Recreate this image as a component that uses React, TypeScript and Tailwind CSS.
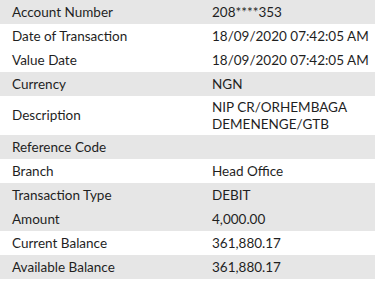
import React from "react";

const rows: { label: string; value: React.ReactNode; gray: boolean }[] = [
  { label: "Account Number", value: "208****353", gray: true },
  { label: "Date of Transaction", value: "18/09/2020 07:42:05 AM", gray: false },
  { label: "Value Date", value: "18/09/2020 07:42:05 AM", gray: false },
  { label: "Currency", value: "NGN", gray: true },
  {
    label: "Description",
    value: (
      <>
        NIP CR/ORHEMBAGA
        <br />
        DEMENENGE/GTB
      </>
    ),
    gray: false,
  },
  { label: "Reference Code", value: "", gray: true },
  { label: "Branch", value: "Head Office", gray: false },
  { label: "Transaction Type", value: "DEBIT", gray: true },
  { label: "Amount", value: "4,000.00", gray: true },
  { label: "Current Balance", value: "361,880.17", gray: false },
  { label: "Available Balance", value: "361,880.17", gray: true },
];

export default function App() {
  return (
    <div
      className="w-[375px] h-[297px] overflow-hidden bg-white text-[#1f1f1f] text-[13.5px] leading-[17px]"
      style={{ fontFamily: "Lato, 'Open Sans', sans-serif" }}
    >
      {rows.map((r) => (
        <div
          key={r.label}
          className={`flex items-center min-h-[24px] py-[2.5px] ${r.gray ? "bg-[#e6e6e6]" : "bg-white"}`}
        >
          <div className="w-[212px] pl-3 shrink-0 whitespace-nowrap">{r.label}</div>
          <div className="flex-1 min-w-0 whitespace-nowrap">{r.value}</div>
        </div>
      ))}
    </div>
  );
}
